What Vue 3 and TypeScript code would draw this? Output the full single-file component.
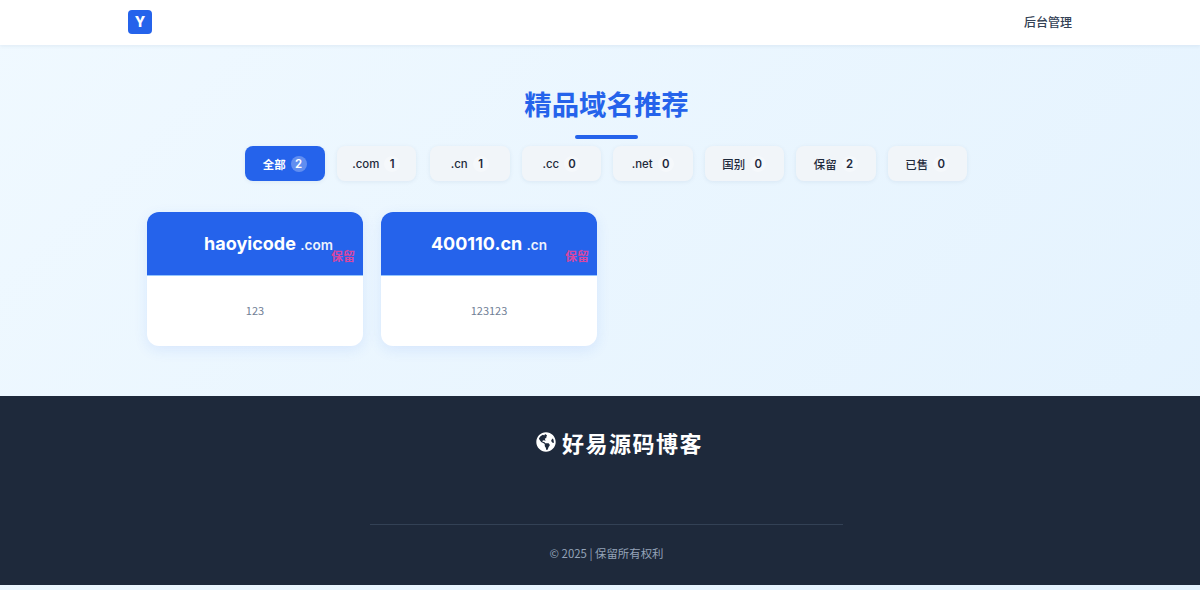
<script setup lang="ts">
interface Filter { label: string; count: number; active?: boolean }
interface Domain { name: string; tld: string; note: string; offset?: boolean }

const filters: Filter[] = [
  { label: '全部', count: 2, active: true },
  { label: '.com', count: 1 },
  { label: '.cn', count: 1 },
  { label: '.cc', count: 0 },
  { label: '.net', count: 0 },
  { label: '国别', count: 0 },
  { label: '保留', count: 2 },
  { label: '已售', count: 0 }
]

const domains: Domain[] = [
  { name: 'haoyicode', tld: '.com', note: '123', offset: true },
  { name: '400110.cn', tld: '.cn', note: '123123' }
]
</script>

<template>
  <div class="page">
    <header class="topbar">
      <div class="logo">Y</div>
      <a class="admin">后台管理</a>
    </header>

    <main class="main">
      <h1 class="title">精品域名推荐</h1>
      <div class="rule"></div>
      <div class="filters">
        <button v-for="f in filters" :key="f.label" class="filter" :class="{ active: f.active }">
          <span>{{ f.label }}</span>
          <span class="count">{{ f.count }}</span>
        </button>
      </div>
      <div class="grid">
        <article v-for="d in domains" :key="d.name" class="card">
          <div class="card-head">
            <div class="domain" :class="{ shifted: d.offset }">
              {{ d.name }} <span class="tld">{{ d.tld }}</span>
            </div>
            <span class="tag">保留</span>
          </div>
          <div class="card-body">{{ d.note }}</div>
        </article>
      </div>
    </main>

    <footer class="footer">
      <div class="brand">
        <svg class="globe" viewBox="0 0 496 512" aria-hidden="true">
          <path fill="currentColor" d="M248 8C111.03 8 0 119.03 0 256s111.03 248 248 248 248-111.03 248-248S384.97 8 248 8zm82.29 357.6c-3.9 3.88-7.99 7.95-11.31 11.28-2.99 3-5.1 6.7-6.17 10.71-1.51 5.66-2.73 11.38-4.77 16.87l-17.39 46.85c-13.76 3-28 4.69-42.65 4.69v-27.38c1.69-12.62-7.64-36.26-22.63-51.25-6-6-9.37-14.14-9.37-22.63v-32.01c0-11.64-6.27-22.34-16.46-27.97-14.37-7.95-34.81-19.06-48.81-26.11-11.48-5.78-22.1-13.14-31.65-21.75l-.8-.72a114.792 114.792 0 0 1-18.06-20.74c-9.38-13.77-24.66-36.42-34.59-51.14 20.47-45.5 57.36-82.04 103.2-101.89l24.01 12.01C203.48 89.74 216 82.01 216 70.11v-11.3c7.99-1.29 16.12-2.11 24.39-2.42l28.3 28.3c6.25 6.25 6.25 16.38 0 22.63L264 112l-10.34 10.34c-3.13 3.12-3.13 8.19 0 11.31l4.69 4.69c3.13 3.12 3.13 8.19 0 11.31l-8 8a8.008 8.008 0 0 1-5.66 2.34h-8.99c-2.08 0-4.08.81-5.58 2.27l-9.92 9.65a8.008 8.008 0 0 0-1.58 9.31l15.59 31.19c2.66 5.32-1.21 11.58-7.15 11.58h-5.64c-1.93 0-3.79-.7-5.24-1.96l-9.28-8.06a16.017 16.017 0 0 0-15.55-3.1l-31.17 10.39a11.95 11.95 0 0 0-8.17 11.34c0 4.53 2.56 8.66 6.61 10.69l11.08 5.54c9.41 4.71 19.79 7.16 30.31 7.16s22.59 27.29 32 32h66.75c8.49 0 16.62 3.37 22.63 9.37l13.69 13.69a30.503 30.503 0 0 1 8.93 21.57 46.536 46.536 0 0 1-13.72 32.98zM417 274.25c-5.79-1.45-10.84-5-14.15-9.97l-17.98-26.97a23.97 23.97 0 0 1 0-26.62l19.59-29.38c2.32-3.47 5.5-6.29 9.24-8.15l12.98-6.49C440.2 193.59 448 223.87 448 256c0 8.67-.74 17.16-1.82 25.54L417 274.25z"/>
        </svg>
        <span>好易源码博客</span>
      </div>
      <div class="divider"></div>
      <p class="copy">© 2025 | 保留所有权利</p>
    </footer>
  </div>
</template>

<style>
html, body { margin: 0; }
body { background: #e6f4ff; }
</style>

<style scoped>
.page {
  height: 590px;
  overflow: hidden;
  background: linear-gradient(135deg, #f0f9ff 0%, #e3f2fe 100%);
  font-family: "Noto Sans CJK SC", "Noto Sans", sans-serif;
}
.topbar {
  height: 45px;
  box-sizing: border-box;
  padding: 0 128px 2px;
  display: flex;
  align-items: center;
  justify-content: space-between;
  background: #fff;
  box-shadow: 0 1px 4px rgba(30, 64, 120, 0.08);
  position: relative;
}
.logo {
  width: 24px;
  height: 24px;
  border-radius: 4px;
  background: #2563eb;
  color: #fff;
  font: 800 14px/24px Inter, sans-serif;
  text-align: center;
}
.admin {
  font-size: 12px;
  font-weight: 500;
  line-height: 18px;
  color: #334155;
}
.main {
  height: 351px;
  box-sizing: border-box;
  padding: 39px 0 0 13px;
  display: flex;
  flex-direction: column;
  align-items: center;
}
.title {
  margin: 0;
  font-size: 27.4px;
  line-height: 38px;
  font-weight: 700;
  color: #2563eb;
}
.rule {
  width: 63px;
  height: 4px;
  margin-top: 13px;
  border-radius: 2px;
  background: #2563eb;
}
.filters {
  display: flex;
  gap: 12px;
  margin-top: 7px;
  margin-right: 1px;
}
.filter {
  height: 35px;
  width: 79.5px;
  padding: 0;
  border: 0;
  border-radius: 8px;
  display: flex;
  align-items: center;
  justify-content: center;
  gap: 5px;
  background: #f1f5f9;
  color: #1e293b;
  font-family: Inter, "Noto Sans CJK SC", sans-serif;
  font-size: 11.4px;
  font-weight: 500;
  box-shadow: 0 1px 4px rgba(30, 64, 120, 0.08);
}
.filter:nth-child(3) { margin-left: 2px; }
.filter.active {
  background: #2563eb;
  color: #fff;
  font-weight: 700;
}
.count {
  min-width: 16px;
  height: 16px;
  border-radius: 8px;
  line-height: 16px;
  text-align: center;
  font-weight: 600;
  background: rgba(255, 255, 255, 0.28);
}
.filter:not(.active) .count {
  background: rgba(255, 255, 255, 0.3);
}
.grid {
  align-self: stretch;
  margin: 31px 0 0 134px;
  display: grid;
  grid-template-columns: repeat(auto-fill, 216px);
  gap: 18px;
}
.card {
  height: 134px;
  border-radius: 12px;
  overflow: hidden;
  background: #fff;
  box-shadow: 0 4px 14px rgba(37, 99, 235, 0.1);
}
.card-head {
  height: 64px;
  box-sizing: border-box;
  position: relative;
  background: #2563eb;
  border-bottom: 1px solid #93c5fd;
  color: #fff;
  display: flex;
  align-items: center;
  justify-content: center;
}
.domain {
  font-family: Inter, sans-serif;
  font-size: 18px;
  font-weight: 700;
  white-space: nowrap;
}
.domain.shifted { margin-left: 27px; }
.tld {
  font-size: 13.6px;
  font-weight: 600;
  opacity: 0.92;
}
.tag {
  position: absolute;
  right: 8px;
  top: 35px;
  font-size: 12px;
  font-weight: 700;
  line-height: 18px;
  color: #d946a0;
}
.card-body {
  height: 70px;
  padding-bottom: 3px;
  box-sizing: border-box;
  display: flex;
  align-items: center;
  justify-content: center;
  font-size: 11px;
  color: #718096;
}
.footer {
  height: 189px;
  box-sizing: border-box;
  padding: 30px 0 0 13px;
  background: #1e293b;
  display: flex;
  flex-direction: column;
  align-items: center;
  color: #fff;
}
.brand {
  display: flex;
  align-items: center;
  gap: 6px;
  padding-left: 26px;
  height: 32px;
  font-size: 22px;
  font-weight: 700;
  letter-spacing: 1.5px;
}
.globe {
  width: 20px;
  height: 20px;
}
.divider {
  width: 473px;
  height: 1px;
  margin-top: 66px;
  background: #334155;
}
.copy {
  margin: 19px 0 0;
  font-size: 11.4px;
  line-height: 18px;
  color: #94a3b8;
}
</style>
